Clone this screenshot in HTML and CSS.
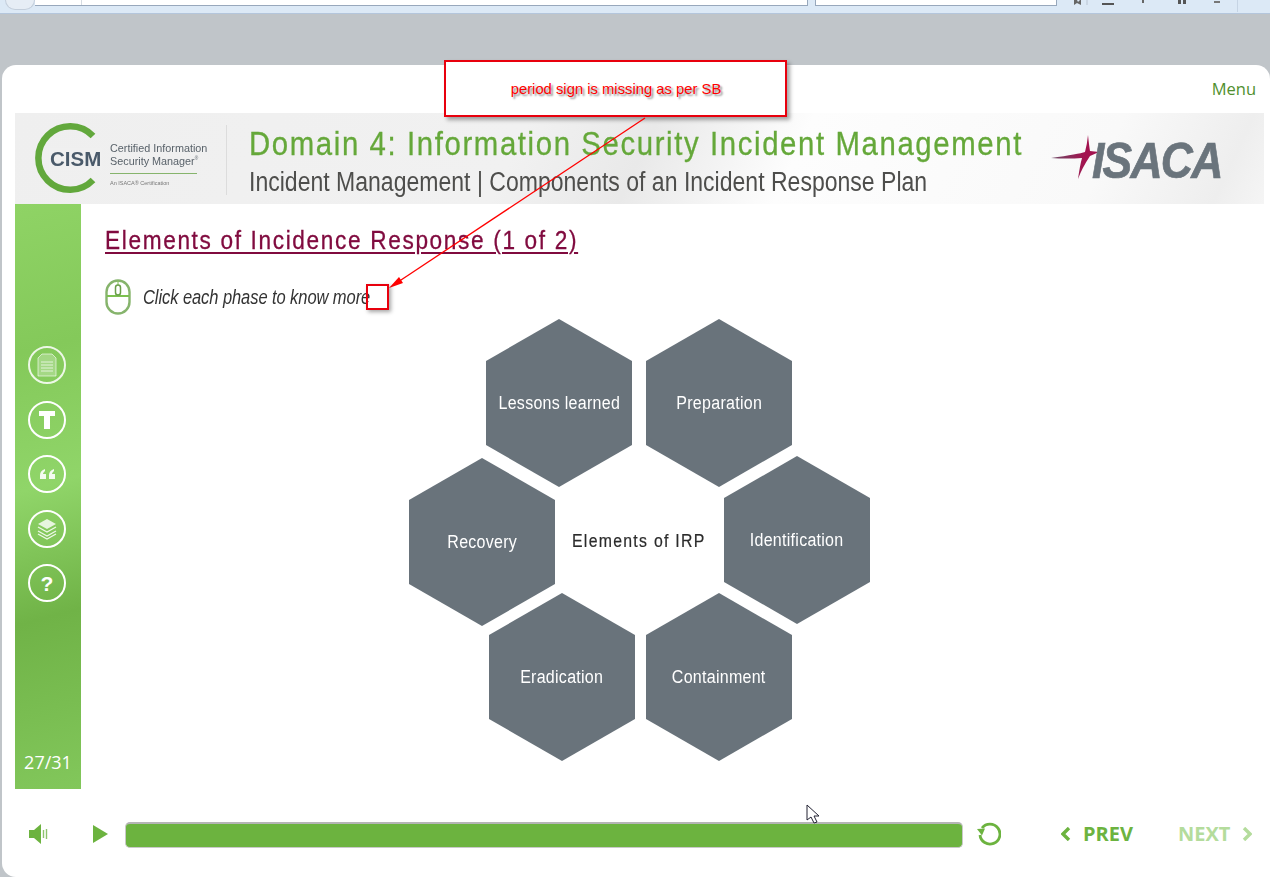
FILE: index.html
```html
<!DOCTYPE html>
<html lang="en">
<head>
<meta charset="utf-8">
<title>Elements of Incidence Response</title>
<link rel="stylesheet" href="styles.css">
</head>
<body>
<div class="browserbar">
  <div class="backbtn"></div>
  <div class="urlbox"><span class="urlmark"></span></div>
  <div class="searchbox"></div>
  <div class="tools">
    <svg width="167" height="12" viewBox="0 0 167 12"><path d="M5 0l1 0 1 2 2-2h1v5l-4-2-3 2V0z" fill="#666"/><path d="M16 0v5" stroke="#b9c4d2"/><rect x="31" y="3" width="12" height="2" fill="#555"/><rect x="71" y="0" width="2" height="3" fill="#666"/><rect x="107" y="0" width="3" height="4" fill="#555"/><rect x="112" y="0" width="3" height="4" fill="#555"/><path d="M143 2h6" stroke="#777" stroke-width="2"/><path d="M166.500 0v12" stroke="#c6d4e4"/></svg>
  </div>
</div>
<main class="player">
  <div class="menurow"><span class="menu">Menu</span></div>
  <header class="banner">
    <div class="cism">
      <svg class="cismring" width="80" height="80" viewBox="0 0 80 80"><path d="M63 18A31.750 31.750 0 1 0 63 62" fill="none" stroke="#62a83c" stroke-width="6.500"/></svg>
      <span class="cismword">CISM</span>
      <div class="cismtext">
        <span class="cismline">Certified Information</span>
        <span class="cismline">Security Manager<sup class="tm">®</sup></span>
        <span class="cismrule"></span>
        <span class="cismsub">An ISACA® Certification</span>
      </div>
    </div>
    <div class="titles">
      <h1 class="domain">Domain 4: Information Security Incident Management</h1>
      <h2 class="topic">Incident Management | Components of an Incident Response Plan</h2>
    </div>
    <div class="isaca">
      <svg class="star" width="52" height="48" viewBox="0 0 52 48"><defs><linearGradient id="stargrad" x1="0" x2="1" y1="0" y2="0"><stop offset="0" stop-color="#6d4a66"/><stop offset=".7" stop-color="#a3134f"/></linearGradient></defs><path d="M2 25Q30 21 36 19Q38 12 39 2Q40 12 41 18L50 19L41 23Q33 35 29 46Q31 32 33 25Q18 26 2 25Z" fill="url(#stargrad)"/></svg>
      <span class="isacaword">ISACA</span>
    </div>
  </header>
  <div class="middle">
    <nav class="rail">
      <div class="railicons">
        <span class="ricon ricon-doc"><svg width="20" height="24" viewBox="0 0 20 24"><path d="M5 1h10l4 4v18H1V5z" fill="#fff" fill-opacity=".25" stroke="#fff" stroke-opacity=".6"/><path d="M4 9h12M4 12h12M4 15h12M4 18h12" stroke="#fff" stroke-opacity=".7"/></svg></span>
        <span class="ricon"><svg width="16" height="18" viewBox="0 0 16 18"><path d="M0 0h16v5h-5v13H5V5H0z" fill="#fff"/></svg></span>
        <span class="ricon"><svg width="16" height="12" viewBox="0 0 16 12"><path d="M6 1C3 2 1 4 1 7v4h6V6H4c0-1 1-2 2-3zM15 1c-3 1-5 3-5 6v4h6V6h-3c0-1 1-2 2-3z" fill="#fff" fill-opacity=".9"/></svg></span>
        <span class="ricon"><svg width="20" height="22" viewBox="0 0 20 22"><path d="M10 1l9 5-9 5-9-5z" fill="#fff" fill-opacity=".8"/><path d="M1 9l9 5 9-5M1 13l9 5 9-5M1 16l9 5 9-5" fill="none" stroke="#fff" stroke-opacity=".85" stroke-width="1.400"/></svg></span>
        <span class="ricon qmark">?</span>
      </div>
      <div class="pages">27/31</div>
    </nav>
    <section class="content">
      <h3 class="heading">Elements of Incidence Response (1 of 2)</h3>
      <div class="hint">
        <svg width="26" height="36" viewBox="0 0 26 36"><rect x="1.500" y="1.500" width="23" height="33" rx="11.500" fill="none" stroke="#86b46c" stroke-width="2.400"/><path d="M2 17h22" stroke="#7cc04f" stroke-width="2"/><path d="M13 2v15" stroke="#7cc04f"/><rect x="10.500" y="6" width="5" height="10" rx="2.500" fill="#fff" stroke="#6a9f4a" stroke-width="1.500"/></svg>
        <em class="hinttext">Click each phase to know more</em>
      </div>
      <div class="hexes">
        <span class="hex hex-lessons"><span class="hexlabel">Lessons learned</span></span>
        <span class="hex hex-prep"><span class="hexlabel">Preparation</span></span>
        <span class="hex hex-recovery"><span class="hexlabel">Recovery</span></span>
        <span class="hexcenter">Elements of IRP</span>
        <span class="hex hex-ident"><span class="hexlabel">Identification</span></span>
        <span class="hex hex-erad"><span class="hexlabel">Eradication</span></span>
        <span class="hex hex-contain"><span class="hexlabel">Containment</span></span>
      </div>
    </section>
  </div>
  <footer class="controls">
    <svg class="speaker" width="20" height="20" viewBox="0 0 20 20"><path d="M0 6h5l7-6v20l-7-6H0z" fill="#6cb33f"/><path d="M14.500 6v8M17.500 5v10" stroke="#8dc46c" stroke-width="1.400"/></svg>
    <svg class="play" width="15" height="18" viewBox="0 0 15 18"><path d="M0 0l15 9L0 18z" fill="#6cb33f"/></svg>
    <div class="progress"></div>
    <svg class="replay" width="24" height="24" viewBox="0 0 24 24"><path d="M5 6A10 10 0 1 1 3 13" fill="none" stroke="#6cb33f" stroke-width="2.800"/><path d="M0 7l8-.5-3 7z" fill="#6cb33f"/></svg>
    <button class="nav prev"><svg width="10" height="14" viewBox="0 0 10 14"><path d="M8 1L2 7l6 6" fill="none" stroke="currentColor" stroke-width="3.400"/></svg>PREV</button>
    <button class="nav next">NEXT<svg width="10" height="14" viewBox="0 0 10 14"><path d="M2 1l6 6-6 6" fill="none" stroke="currentColor" stroke-width="3.400"/></svg></button>
  </footer>
</main>
<aside class="callout">period sign is missing as per SB</aside>
<svg class="arrow" width="300" height="200" viewBox="0 0 300 200"><path d="M257 1L10 165" stroke="#f00" stroke-width="1.300"/><path d="M1 171L15 166L11 160z" fill="#f00"/></svg>
<div class="markbox"></div>
<svg class="cursor" width="14" height="20" viewBox="0 0 14 20"><path d="M1 1v15l4-3 3 6 3-1-3-6h5z" fill="#fff" stroke="#223" stroke-width="1"/></svg>
</body>
</html>
```
FILE: styles.css
```css
* { box-sizing: border-box; }
html, body { margin: 0; height: 877px; overflow: hidden; }
body { position: relative; background: #c0c5c9; font-family: "Liberation Sans", Arial, sans-serif; display: flex; flex-direction: column; }
.browserbar { height: 14px; flex: none; background: #dce9f6; border-bottom: 1px solid #b4c6dc; position: relative; display: flex; align-items: flex-start; }
.backbtn { width: 30px; height: 10px; margin-left: 5px; border: 1px solid #c3cedb; border-top: 0; border-radius: 0 0 15px 15px; background: #e6edf5; }
.urlbox { width: 773px; height: 6px; background: #fff; border: 1px solid #98a8bc; border-top: 0; border-left: 0; }
.urlmark { display: block; width: 1px; height: 5px; margin-left: 46px; background: #d5dbe2; }
.searchbox { width: 242px; height: 6px; margin-left: 7px; background: #fff; border: 1px solid #98a8bc; border-top: 0; }
.tools { margin-left: 14px; line-height: 0; }
.player { margin: 51px 0 0 2px; flex: 1; background: #fff; border-radius: 14px 14px 0 14px; padding: 0 6px 0 13px; display: flex; flex-direction: column; }
.menurow { height: 48px; display: flex; justify-content: flex-end; align-items: flex-end; padding: 0 8px 14px 0; }
.menu { font-family: "Open Sans", sans-serif; font-size: 16.5px; color: #4f8f2e; line-height: 20px; }
.banner { height: 91px; flex: none; display: flex; align-items: flex-start; background: linear-gradient(115deg, #efefef 0, #f1f1f1 40%, #e9e9e9 50%, #fdfdfd 62%, #f9f9f9 86%, #eeeeee 96%, #f5f5f5 100%); }
.cism { position: relative; width: 192px; height: 91px; margin-right: 42px; flex: none; }
.cism::after { content: ""; position: absolute; right: -20px; top: 12px; height: 70px; width: 1px; background: #dcdcdc; }
.cismring { position: absolute; left: 15px; top: 5px; filter: blur(.4px); }
.cismword { position: absolute; left: 34px; top: 35px; font-size: 20.5px; font-weight: 700; color: #4a5a6a; line-height: 22px; background: #f0f0f0; padding: 0 1px; filter: blur(.4px); }
.cismtext { position: absolute; left: 95px; top: 29px; display: flex; flex-direction: column; width: 100px; filter: blur(.35px); }
.cismline { font-size: 11.5px; line-height: 13px; color: #59626a; white-space: nowrap; transform: scaleX(.94); transform-origin: left; }
.tm { font-size: 5px; line-height: 0; }
.cismrule { display: block; height: 1px; width: 87px; background: #86b46c; margin: 5px 0 5px; flex: none; }
.cismsub { font-size: 5.5px; color: #777; line-height: 8px; white-space: nowrap; }
.titles { width: 800px; flex: none; padding-top: 10px; }
.domain { margin: 0; font-size: 33px; line-height: 41px; font-weight: 400; color: #65a83a; white-space: nowrap; font-family: "Liberation Sans", sans-serif; transform: scaleX(.89); transform-origin: left; letter-spacing: 1.8px; -webkit-text-stroke: .3px #65a83a; }
.topic { margin: 0; font-size: 27px; line-height: 36px; font-weight: 400; color: #4e4e4c; white-space: nowrap; transform: scaleX(.853); transform-origin: left; }
.isaca { position: relative; flex: none; width: 180px; height: 91px; margin-left: 0; filter: blur(.35px); }
.star { position: absolute; left: 0; top: 20px; }
.isacaword { position: absolute; left: 43px; top: 20px; font-size: 50px; line-height: 56px; font-weight: 700; font-style: italic; color: #6a747c; letter-spacing: -2px; -webkit-text-stroke: .7px #6a747c; transform: scaleX(.89); transform-origin: left; }
.middle { height: 585px; flex: none; display: flex; }
.rail { width: 66px; flex: none; display: flex; flex-direction: column; align-items: center; padding-right: 2px; background: linear-gradient(165deg, #8fd365 0, #84c95a 25%, #90d569 48%, #70b347 70%, #82c75b 100%); color: #fff; }
.railicons { margin-top: 142px; display: flex; flex-direction: column; gap: 16.5px; }
.ricon { width: 38px; height: 38px; border: 2.5px solid #fff; border-radius: 50%; display: flex; align-items: center; justify-content: center; flex: none; }
.ricon-doc { border-color: rgba(255,255,255,.85); }
.qmark { font-size: 21px; font-weight: 700; color: #fff; line-height: 1; }
.pages { margin-top: auto; padding-bottom: 15px; margin-left: 2px; font-family: "Open Sans", sans-serif; font-size: 18px; line-height: 24px; color: #fff; }
.content { flex: 1; padding: 22px 0 0 24px; position: relative; }
.heading { display: inline-block; margin: 0; font-size: 26px; line-height: 28px; font-weight: 400; color: #800b3f; text-decoration: underline; text-decoration-thickness: 1.5px; text-underline-offset: 3px; white-space: nowrap; letter-spacing: 1.9px; -webkit-text-stroke: .3px #800b3f; transform: scaleX(.87); transform-origin: left; }
.hint { display: flex; align-items: center; gap: 12px; margin-top: 25px; }
.hinttext { font-size: 20px; line-height: 26px; color: #333; white-space: nowrap; transform: scaleX(.826); transform-origin: left; letter-spacing: -.1px; }
.hexes { position: absolute; inset: 0; }
.hex { position: absolute; width: 146px; height: 168px; display: flex; align-items: center; justify-content: center; background: #69737b; clip-path: polygon(50% 0, 100% 25%, 100% 75%, 50% 100%, 0 75%, 0 25%); color: #fff; font-size: 18px; white-space: nowrap; letter-spacing: .3px; }
.hexlabel { display: inline-block; transform: scaleX(.89); }
.hex-lessons { left: 405px; top: 115px; }
.hex-prep { left: 565px; top: 115px; }
.hex-recovery { left: 328px; top: 254px; }
.hex-ident { left: 643px; top: 252px; }
.hex-erad { left: 408px; top: 389px; }
.hex-contain { left: 565px; top: 389px; }
.hexcenter { position: absolute; left: 491px; top: 325px; font-size: 18px; line-height: 24px; color: #2b2b2b; white-space: nowrap; letter-spacing: 1.45px; -webkit-text-stroke: .2px #2b2b2b; transform: scaleX(.88); transform-origin: left; }
.controls { flex: 1; display: flex; align-items: center; padding: 2px 0 0 14px; }
.speaker { flex: none; }
.play { flex: none; margin-left: 44px; }
.progress { width: 838px; height: 26px; margin: 2px 0 0 17px; background: #6cb33f; border-radius: 5px; border: 1px solid #c9c9c9; border-top: 2px solid #b5b5b5; }
.replay { flex: none; margin-left: 14px; }
.nav { border: 0; background: none; padding: 0; font-family: "Open Sans", sans-serif; font-size: 20px; font-weight: 700; display: flex; align-items: center; gap: 12px; line-height: 24px; }
.prev { color: #6cb33f; margin-left: 60px; }
.next { color: #b4dc9c; margin-left: 45px; }
.callout { position: absolute; left: 444px; top: 60px; width: 343px; height: 57px; border: 2px solid #e8000d; background: #fff; color: #f00; font-size: 14.8px; line-height: 55px; text-align: center; box-shadow: 3px 3px 4px rgba(0,0,0,.35); text-shadow: 2px 2px 2px rgba(0,0,0,.45); padding-left: 1px; }
.arrow { position: absolute; left: 388px; top: 117px; }
.markbox { position: absolute; left: 366px; top: 284px; width: 23px; height: 26px; border: 2px solid #e8000d; box-shadow: 2px 2px 4px rgba(0,0,0,.35); }
.cursor { position: absolute; left: 806px; top: 804px; }
```
